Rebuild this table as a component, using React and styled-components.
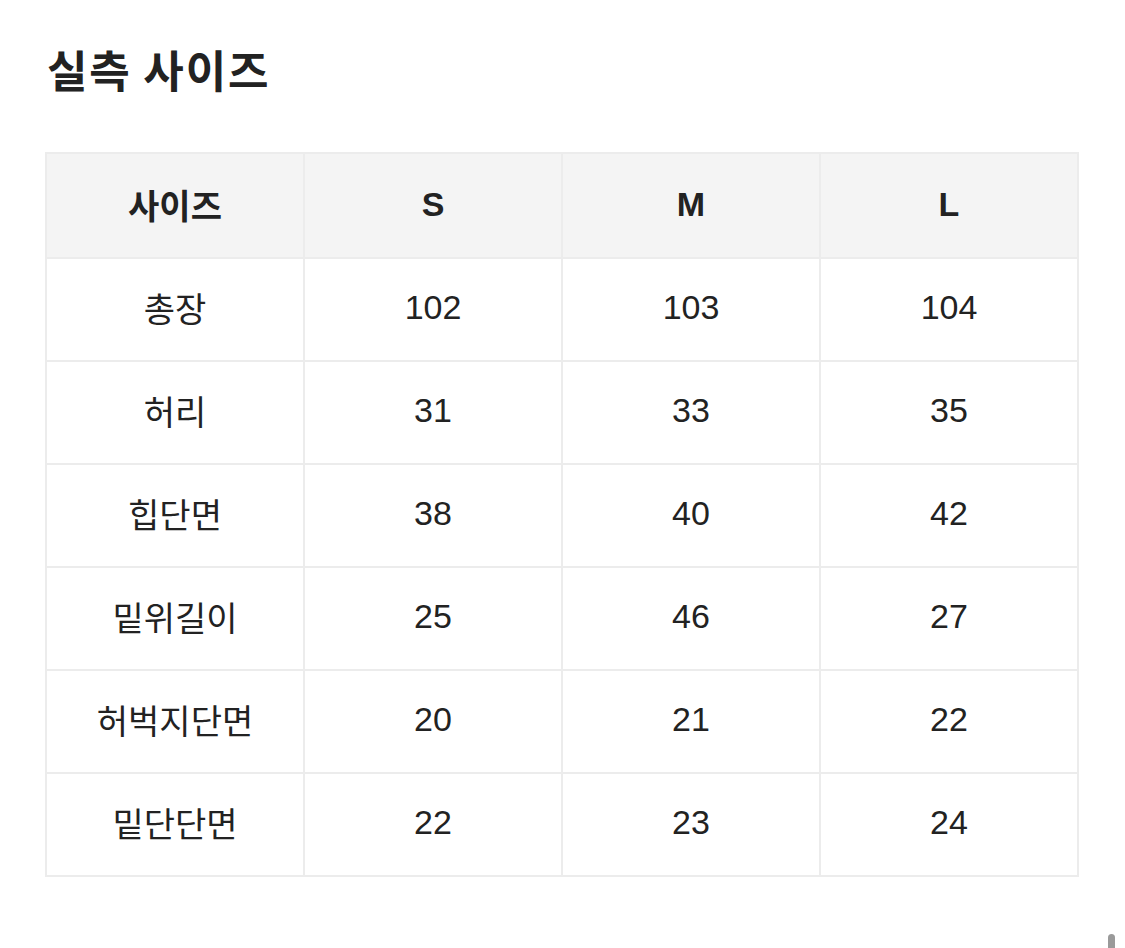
import styled, {createGlobalStyle} from "styled-components";

const GlobalStyle = createGlobalStyle`
    html, body {
        margin: 0;
        padding: 0;
        background: #ffffff;
    }

    body {
        font-family: "Noto Sans CJK KR", "Noto Sans", sans-serif;
        color: #222222;
    }
`;

const sizes = ["S", "M", "L"];

const rows = [
    {label: "총장", values: [102, 103, 104]},
    {label: "허리", values: [31, 33, 35]},
    {label: "힙단면", values: [38, 40, 42]},
    {label: "밑위길이", values: [25, 46, 27]},
    {label: "허벅지단면", values: [20, 21, 22]},
    {label: "밑단단면", values: [22, 23, 24]},
];

export default function App() {
    return (
        <Page>
            <GlobalStyle/>
            <Title>실측 사이즈</Title>
            <SizeTable>
                <thead>
                <tr>
                    <HeadCell>사이즈</HeadCell>
                    {sizes.map(size => (
                        <HeadCell key={size} $latin>{size}</HeadCell>
                    ))}
                </tr>
                </thead>
                <tbody>
                {rows.map(row => (
                    <tr key={row.label}>
                        <Cell>{row.label}</Cell>
                        {row.values.map((value, i) => (
                            <Cell key={i} $latin>{value}</Cell>
                        ))}
                    </tr>
                ))}
                </tbody>
            </SizeTable>
            <ScrollThumb/>
        </Page>
    );
}

const Page = styled.div`
    position: relative;
    width: 1125px;
    height: 948px;
    box-sizing: border-box;
    padding: 38px 46px 0 45px;
    overflow: hidden;
`;

const Title = styled.h1`
    margin: 0 0 52px 2px;
    font-size: 44px;
    font-weight: 700;
    line-height: 62px;
    letter-spacing: 1.8px;
    color: #222222;
`;

const SizeTable = styled.table`
    width: 1034px;
    border-collapse: collapse;
    table-layout: fixed;
    border: 2px solid #ececec;
`;

const HeadCell = styled.th`
    height: 105px;
    box-sizing: border-box;
    padding: 0 0 3px 0;
    background: #f4f4f4;
    border: 2px solid #ececec;
    font-family: ${p => p.$latin ? "\"Liberation Sans\", Arial" : "\"Noto Sans CJK KR\""}, sans-serif;
    font-size: 34px;
    font-weight: 700;
    color: #222222;
    text-align: center;
    vertical-align: middle;
`;

const Cell = styled.td`
    height: 103px;
    box-sizing: border-box;
    padding: 0 0 4px 0;
    border: 2px solid #ececec;
    font-family: ${p => p.$latin ? "\"Liberation Sans\", Arial" : "\"Noto Sans CJK KR\""}, sans-serif;
    font-size: 34px;
    font-weight: 400;
    color: #222222;
    text-align: center;
    vertical-align: middle;
`;

const ScrollThumb = styled.div`
    position: absolute;
    right: 10px;
    bottom: -6px;
    width: 7px;
    height: 20px;
    border-radius: 4px;
    background: #9a9a9a;
`;
